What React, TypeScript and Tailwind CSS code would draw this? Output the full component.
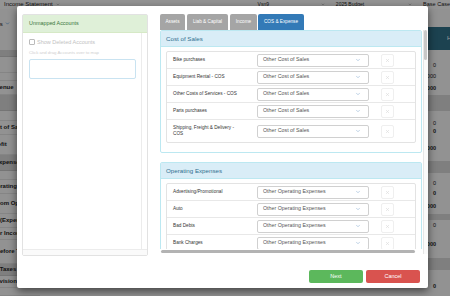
import { ChevronDown, X } from "lucide-react";

const leftRows = [
  { h: "h-[7px]", band: true },
  { h: "h-[16px]" },
  { h: "h-[8px]" },
  { h: "h-[14px]", label: "Total Revenue", ml: "-ml-[27px]" },
  { h: "h-[16px]", band: true },
  { h: "h-[10px]" },
  { h: "h-[14px]", label: "Total Cost of Sales", ml: "-ml-[27px]" },
  { h: "h-[20px]", label: "Gross Profit", ml: "-ml-[28px]" },
  { h: "h-[16px]", band: true, label: "Operating Expenses", ml: "-ml-[35px]" },
  { h: "h-[9px]" },
  { h: "h-[14px]", label: "Total Operating Expenses", ml: "-ml-[27px]" },
  { h: "h-[20px]", label: "Income from Operations", ml: "-ml-[27px]" },
  { h: "h-[14px]", label: "Other Inc/(Expense)", ml: "-ml-[28px]" },
  { h: "h-[12px]", label: "Net Other Income", ml: "-ml-[25px]" },
  { h: "h-[24px]", label: "Income Before Taxes", ml: "-ml-[27px]" },
  { h: "h-[12px]", band: true, label: "Income Taxes", ml: "-ml-[23px]" },
  { h: "h-[12px]", label: "Tax Provision for Income", ml: "-ml-[22px]" },
  { h: "h-[8px]" },
];

const rightRows = [
  { h: "h-[10px]" },
  { h: "h-[11px]", v: "0" },
  { h: "h-[10px]", v: "1,000" },
  { h: "h-[14px]", v: "1,000", bold: true },
  { h: "h-[16px]", band: true },
  { h: "h-[7px]" },
  { h: "h-[10px]", v: "0" },
  { h: "h-[7px]", v: "0", bold: true },
  { h: "h-[26px]", v: "1,000", bold: true },
  { h: "h-[12px]", band: true },
  { h: "h-[5px]" },
  { h: "h-[10px]", v: "0" },
  { h: "h-[10px]", v: "0", bold: true },
  { h: "h-[16px]", v: "1,000", bold: true },
  { h: "h-[6px]", band: true },
  { h: "h-[10px]", v: "0" },
  { h: "h-[8px]" },
  { h: "h-[12px]", v: "1,000", bold: true },
  { h: "h-[8px]" },
  { h: "h-[12px]", band: true },
  { h: "h-[10px]" },
  { h: "h-[12px]", v: "0", bold: true },
  { h: "h-[4px]" },
];

const cosRows = [
  "Bike purchases",
  "Equipment Rental - COS",
  "Other Costs of Services - COS",
  "Parts purchases",
  "Shipping, Freight & Delivery - COS",
];

const opRows = [
  "Advertising/Promotional",
  "Auto",
  "Bad Debts",
  "Bank Charges",
  "Bank Service Charges",
  "Computer and Internet Expenses",
];

const tabs = [
  { name: "Assets", w: "w-[25px]", ml: "" },
  { name: "Liab & Capital", w: "w-[41px]", ml: "ml-[2px]" },
  { name: "Income", w: "w-[27px]", ml: "ml-[2px]" },
  { name: "COS & Expense", w: "w-[46px]", ml: "ml-[1px]", active: true },
];

function MapRow({ label, value, last }: { label: string; value: string; last?: boolean }) {
  return (
    <div className={`flex items-center ${last ? "h-[22px]" : "h-[17px] border-b border-[#e8e8e8]"}`}>
      <div className="w-[90px] pl-[6px] pr-[16px] text-[4.7px] leading-[6px] text-[#333]">{label}</div>
      <div className="w-[112px] h-[13px] border border-[#d0d0d0] rounded-[2px] flex items-center pl-[5px] pr-[7px] text-[5.3px] text-[#555]">
        <span className="flex-1 whitespace-nowrap">{value}</span>
        <ChevronDown size={6} strokeWidth={2} className="text-[#7ea6cc]" />
      </div>
      <div className="ml-[12px] w-[13px] h-[13px] border border-[#efefef] rounded-[2px] flex items-center justify-center">
        <X size={5} strokeWidth={3} className="text-[#dcdcdc]" />
      </div>
    </div>
  );
}

function Panel({ title, rows, value, className }: { title: string; rows: string[]; value: string; className?: string }) {
  return (
    <div className={`border border-[#bce8f1] rounded-[2px] mr-[1px] ${className ?? ""}`}>
      <div className="h-[16px] bg-[#d9edf7] border-b border-[#bce8f1] text-[#31708f] text-[6.2px] pl-[5px] flex items-center">
        {title}
      </div>
      <div className="px-[5px] pt-[4px] pb-[9px]">
        <div className="border border-[#e3e3e3] rounded-[2px]">
          {rows.map((r, i) => (
            <MapRow key={r} label={r} value={value} last={i === rows.length - 1 && rows.length === 5} />
          ))}
        </div>
      </div>
    </div>
  );
}

export default function App() {
  return (
    <div className="relative w-[450px] h-[296px] overflow-hidden bg-[#f3f3f3] font-['Liberation_Sans',Arial,sans-serif]">
      {/* page behind the dialog */}
      <div className="h-[9px] flex items-center bg-[#f7f7f7] text-[#222] whitespace-nowrap">
        <span className="ml-[4px] text-[6px]">Income Statement</span>
        <ChevronDown size={5} strokeWidth={2} className="ml-[3px] text-[#555]" />
        <span className="ml-[198px] text-[5px]">Vsn9</span>
        <ChevronDown size={5} strokeWidth={2} className="ml-[52px] text-[#555]" />
        <span className="ml-[11px] text-[5px]">2025 Budget</span>
        <ChevronDown size={5} strokeWidth={2} className="ml-[44px] text-[#555]" />
        <span className="ml-[11px] text-[5.5px]">Base Case</span>
      </div>
      <div className="h-[18px] flex items-end whitespace-nowrap">
        <span className="-ml-[17px] text-[6px] leading-[6px] text-[#222]">Actuals</span>
        <ChevronDown size={5} strokeWidth={2.5} className="ml-[2px] mb-[1px] text-[#2a7bd0]" />
      </div>
      <div className="flex">
        <div className="w-[40px] flex flex-col">
          <div className="h-[23px]" />
          {leftRows.map((r, i) => (
            <div
              key={i}
              className={`${r.h} flex items-center whitespace-nowrap text-[6px] font-bold text-[#222] border-b ${r.band ? "bg-[#d4d4d4] border-[#c4c4c4]" : "border-[#dedede]"}`}
            >
              {r.label && <span className={r.ml}>{r.label}</span>}
            </div>
          ))}
        </div>
        <div className="ml-auto w-[50px] flex flex-col">
          <div className="h-[23px] bg-[#2f6f86] text-white text-[6px] flex items-center pl-[47px]">Hist</div>
          {rightRows.map((r, i) => (
            <div
              key={i}
              className={`${r.h} flex items-center justify-end pr-[14px] text-[5.5px] text-[#222] ${r.bold ? "font-bold" : ""} ${r.band ? "bg-[#d4d4d4]" : ""}`}
            >
              {r.v}
            </div>
          ))}
        </div>
      </div>

      {/* backdrop */}
      <div className="absolute inset-0 bg-black/40" />

      {/* dialog */}
      <div className="absolute left-[17px] top-[6px] w-[411px] h-[282px] bg-white rounded-[2px] shadow-[0_3px_9px_rgba(0,0,0,0.55)] flex flex-col">
        <div className="flex h-[250px] pt-[8px] pl-[5px]">
          {/* unmapped accounts */}
          <div className="w-[126px] h-[242px] border border-[#e2e2e2] rounded-[2px] flex flex-col">
            <div className="h-[18px] bg-[#dff0d8] border-b border-[#d6e9c6] text-[#3c763d] text-[5.4px] pl-[6px] flex items-center">
              Unmapped Accounts
            </div>
            <div className="flex-1 flex">
              <div className="flex-1 border-r border-[#ececec] pl-[6px] pt-[6px]">
                <div className="h-[6px] flex items-center">
                  <div className="w-[6px] h-[6px] border border-[#bbb] rounded-[1px]" />
                  <span className="ml-[2px] text-[5.5px] text-[#c2c2c2]">Show Deleted Accounts</span>
                </div>
                <div className="mt-[5px] h-[6px] flex items-center text-[4.3px] text-[#cfcfcf]">
                  Click and drag Accounts over to map
                </div>
                <div className="mt-[3px] w-[107px] h-[20px] border border-[#c9e3f1] rounded-[2px]" />
              </div>
              <div className="w-[5px]" />
            </div>
            <div className="h-[6px] border-t border-[#ececec] bg-[#fafafa]" />
          </div>

          {/* mapping area */}
          <div className="ml-[12px] flex-1 flex flex-col">
            <div className="h-[16px] flex">
              {tabs.map((t) => (
                <div
                  key={t.name}
                  className={`${t.w} ${t.ml} rounded-t-[2px] flex items-center justify-center text-[4.7px] text-white whitespace-nowrap ${t.active ? "bg-[#337ab7]" : "bg-[#a5a5a5]"}`}
                >
                  {t.name}
                </div>
              ))}
            </div>
            <div className="flex h-[224px]">
              <div className="w-[263px] flex flex-col">
                <div className="h-[219px] overflow-hidden">
                  <Panel title="Cost of Sales" rows={cosRows} value="Other Cost of Sales" />
                  <Panel title="Operating Expenses" rows={opRows} value="Other Operating Expenses" className="mt-[9px]" />
                </div>
                <div className="h-[5px] flex items-center">
                  <div className="ml-[1px] w-[254px] h-[3px] rounded-full bg-[#b3b3b3]" />
                </div>
              </div>
              <div className="w-[5px] border-l border-[#e6e6e6] bg-[#fafafa]">
                <div className="w-[3px] h-[30px] rounded-full bg-[#c8c8c8]" />
              </div>
            </div>
          </div>
        </div>

        <div className="flex justify-end pr-[8px] pt-[14px]">
          <button className="w-[54px] h-[13px] rounded-[2px] bg-[#5cb85c] text-white text-[5.5px]">Next</button>
          <button className="ml-[3px] w-[54px] h-[13px] rounded-[2px] bg-[#d9534f] text-white text-[5.5px]">Cancel</button>
        </div>
      </div>
    </div>
  );
}
